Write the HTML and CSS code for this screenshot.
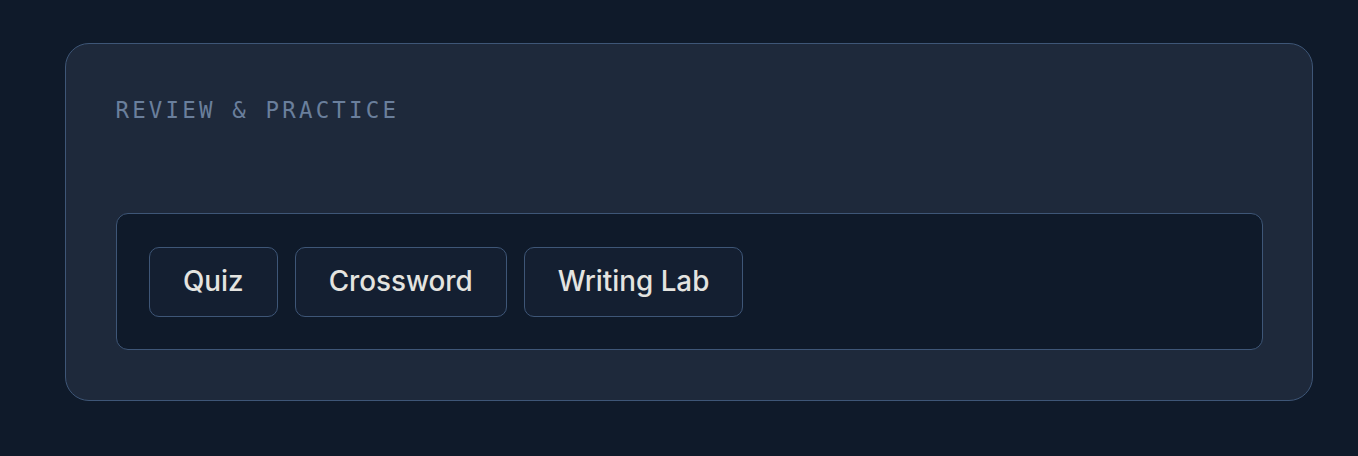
FILE: index.html
```html
<!DOCTYPE html>
<html lang="en">
<head>
<meta charset="utf-8">
<title>Review & Practice</title>
<link rel="stylesheet" href="styles.css">
</head>
<body>
<main class="page">
  <section class="card">
    <h2 class="card-label">REVIEW &amp; PRACTICE</h2>
    <div class="tool-box">
      <button class="tool-btn" type="button">Quiz</button>
      <button class="tool-btn" type="button">Crossword</button>
      <button class="tool-btn" type="button">Writing Lab</button>
    </div>
  </section>
</main>
</body>
</html>
```
FILE: styles.css
```css
html, body {
  margin: 0;
  padding: 0;
  background: #0f1a2a;
}

body {
  font-family: Inter, "Noto Sans", sans-serif;
  min-height: 456px;
}

.page {
  padding: 43px 45px 40px 65px;
}

.card {
  background: #1e293b;
  border: 1.5px solid #3e5677;
  border-radius: 24px;
  padding: 49.5px;
}

.card-label {
  margin: 0 0 86px;
  font-family: "DejaVu Sans Mono", "Liberation Mono", monospace;
  font-size: 22.4px;
  font-weight: 400;
  line-height: 33.6px;
  letter-spacing: 3.2px;
  color: #6a7f9c;
}

.tool-box {
  display: flex;
  gap: 17px;
  background: #0f1a2a;
  border: 1.5px solid #3e5677;
  border-radius: 12px;
  padding: 32.5px;
}

.tool-btn {
  font-family: Inter, "Noto Sans", sans-serif;
  font-size: 27.8px;
  font-weight: 500;
  line-height: 39px;
  color: #e4e4e0;
  background: #141f31;
  border: 1.5px solid #3e5677;
  border-radius: 10px;
  padding: 14.5px 33px;
}
```
